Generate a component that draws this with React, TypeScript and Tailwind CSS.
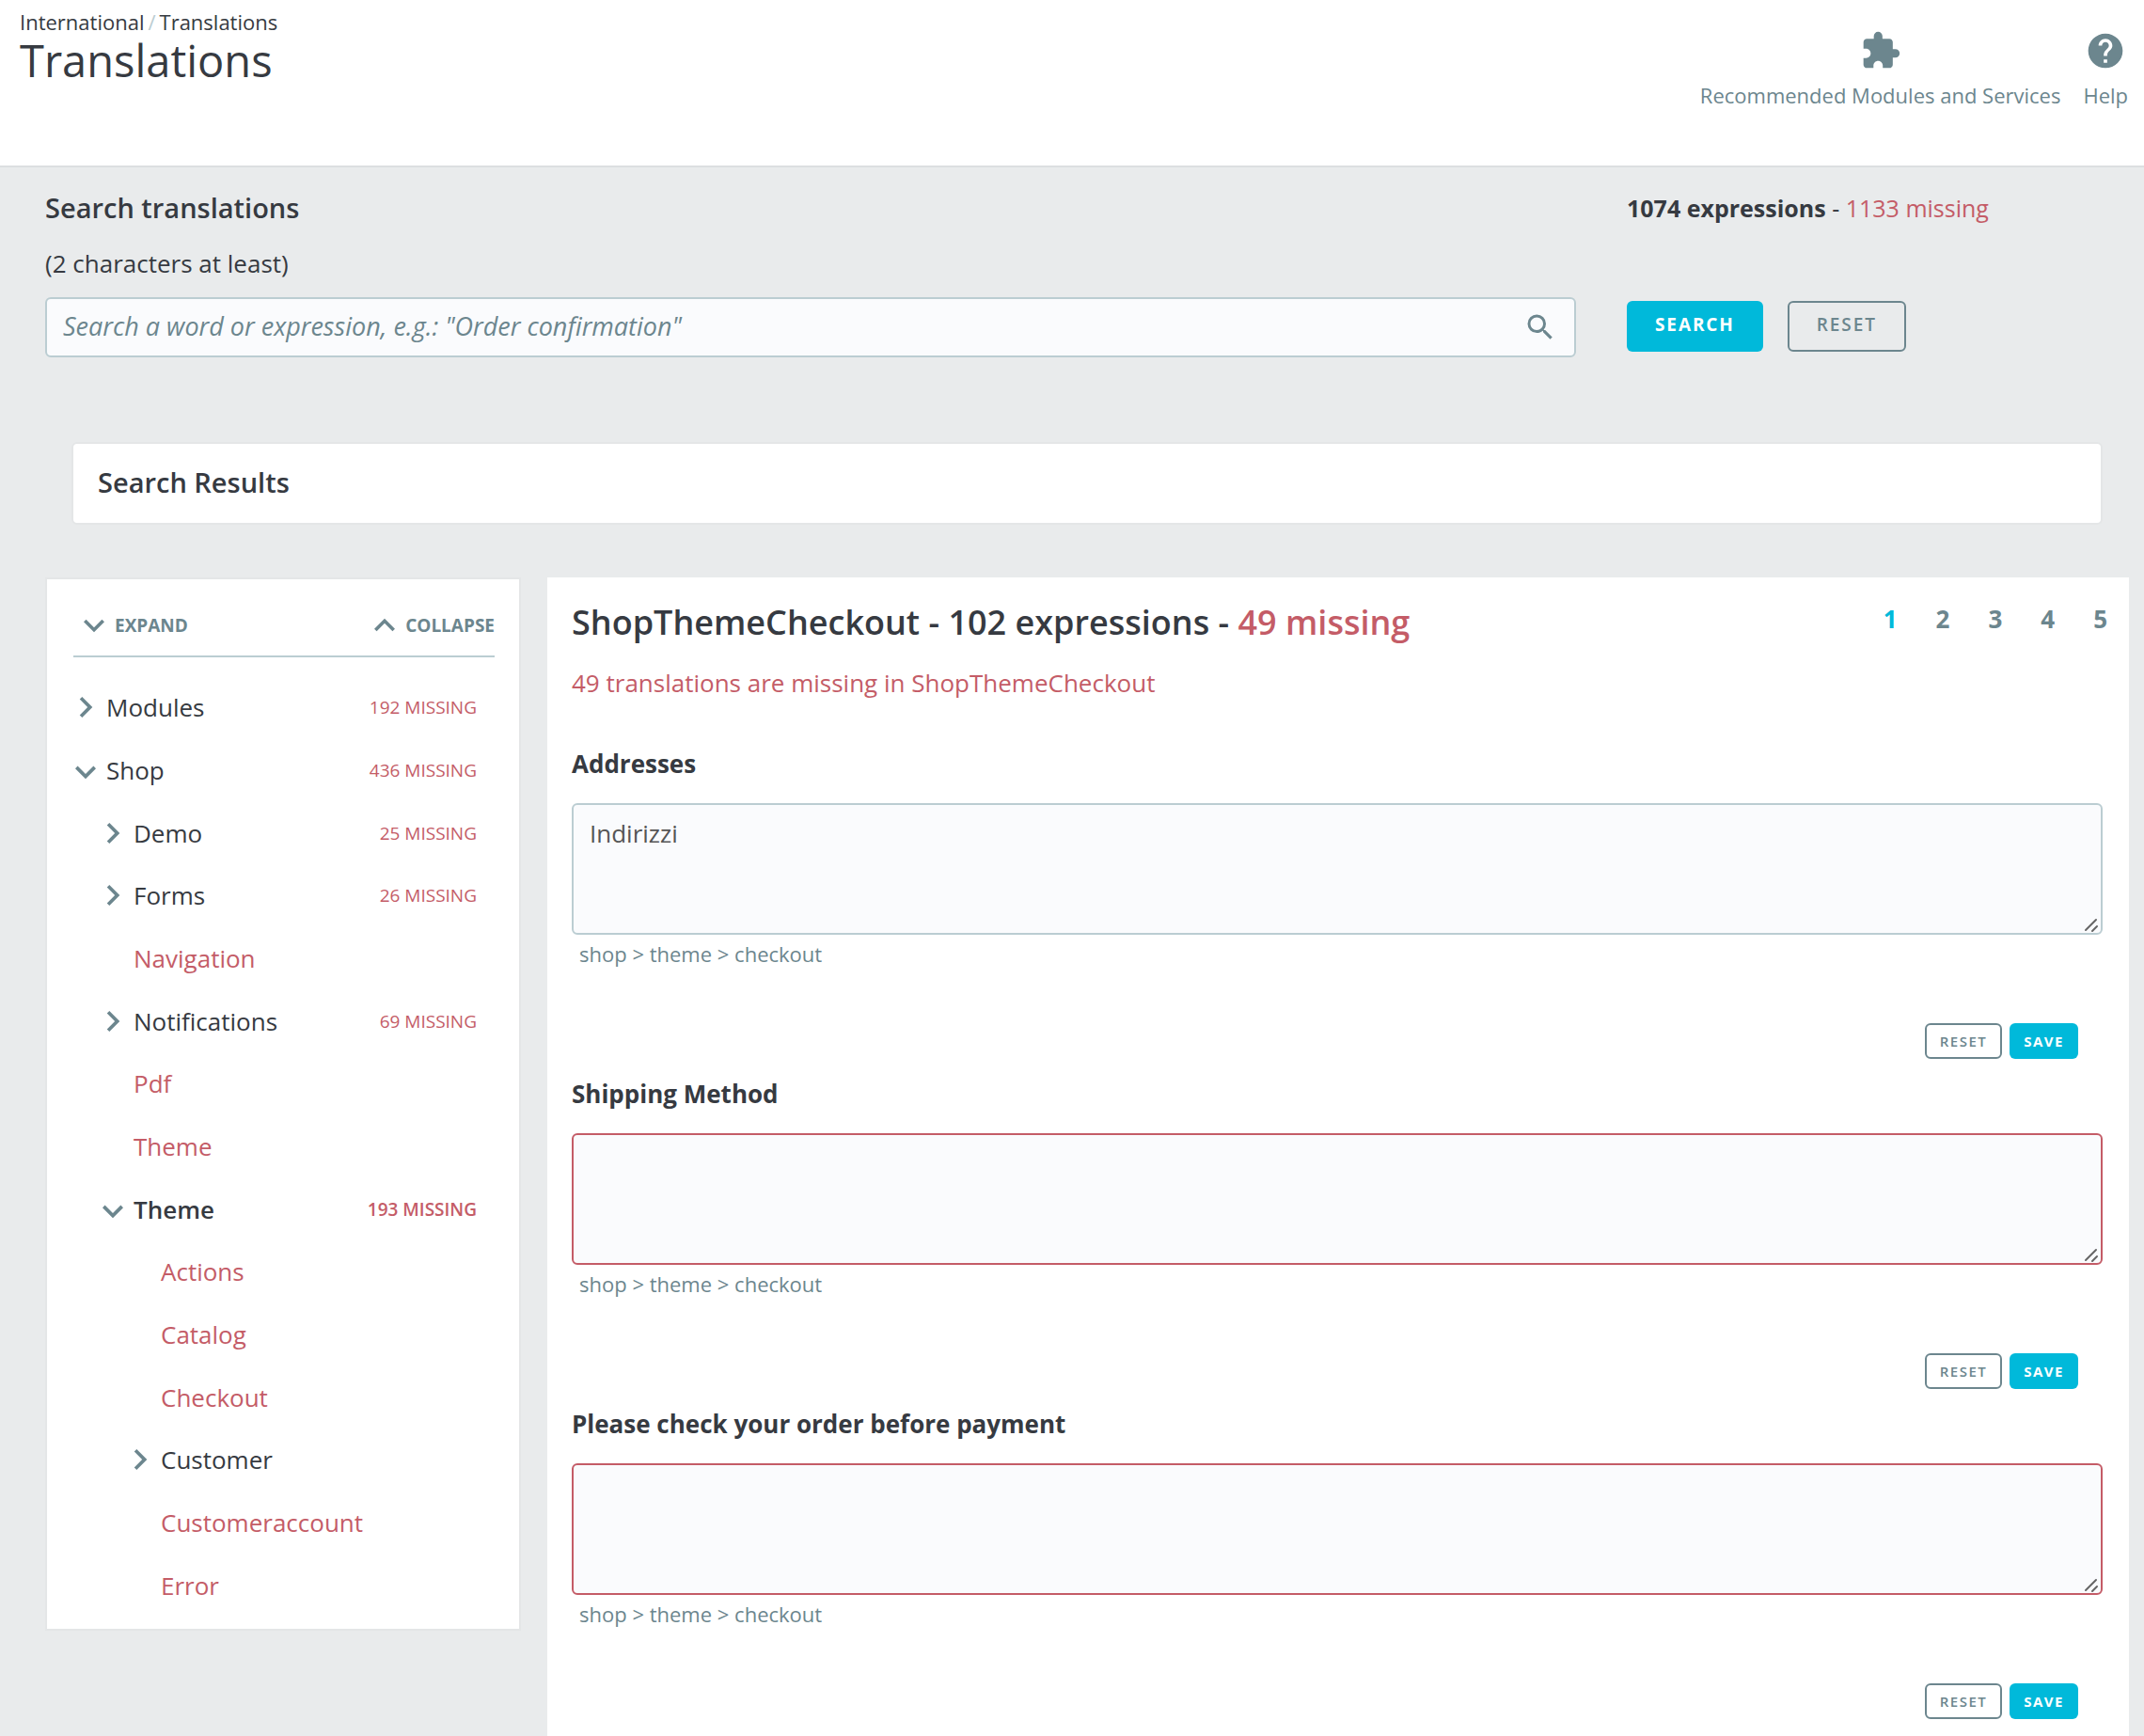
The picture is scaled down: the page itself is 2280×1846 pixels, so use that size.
import React from "react";
import { MdExtension, MdHelp, MdSearch } from "react-icons/md";

type Direction = "right" | "down" | "up";

const CHEVRONS: Record<Direction, string> = {
  right: "M10 6 8.59 7.41 13.17 12l-4.58 4.59L10 18l6-6z",
  down: "M16.59 8.59 12 13.17 7.41 8.59 6 10l6 6 6-6z",
  up: "m12 8-6 6 1.41 1.41L12 10.83l4.59 4.58L18 14z",
};

function Chevron({ direction, viewBox = "0 0 24 24" }: { direction: Direction; viewBox?: string }) {
  return (
    <svg viewBox={viewBox} className="size-11 shrink-0 fill-[#6c868e]" aria-hidden="true">
      <path d={CHEVRONS[direction]} />
    </svg>
  );
}

type Node = {
  name: string;
  level: 0 | 1 | 2;
  state?: "open" | "closed";
  missing?: number;
  active?: boolean;
};

const TREE: Node[] = [
  { name: "Modules", level: 0, state: "closed", missing: 192 },
  { name: "Shop", level: 0, state: "open", missing: 436 },
  { name: "Demo", level: 1, state: "closed", missing: 25 },
  { name: "Forms", level: 1, state: "closed", missing: 26 },
  { name: "Navigation", level: 1 },
  { name: "Notifications", level: 1, state: "closed", missing: 69 },
  { name: "Pdf", level: 1 },
  { name: "Theme", level: 1 },
  { name: "Theme", level: 1, state: "open", missing: 193, active: true },
  { name: "Actions", level: 2 },
  { name: "Catalog", level: 2 },
  { name: "Checkout", level: 2 },
  { name: "Customer", level: 2, state: "closed" },
  { name: "Customeraccount", level: 2 },
  { name: "Error", level: 2 },
];

const INDENT = ["pl-0", "pl-[29px]", "pl-[58px]"];

function TreeRow({ node }: { node: Node }) {
  return (
    <li
      className={`flex h-[66px] items-center nth-[3n+2]:h-[68px] ${INDENT[node.level]} ${
        node.active ? "font-semibold" : ""
      }`}
    >
      {node.state ? (
        <button type="button" className="flex items-center text-[26px] leading-9" aria-expanded={node.state === "open"}>
          {node.state === "open" ? (
            <Chevron direction="down" viewBox="0 -1 24 24" />
          ) : (
            <Chevron direction="right" />
          )}
          {node.name}
        </button>
      ) : (
        <a href="#" className="pl-11 text-[26px] leading-9 text-[#c45c67]">
          {node.name}
        </a>
      )}
      {node.missing && (
        <span className="ml-auto text-[19px] leading-9 text-[#c45c67] uppercase">{node.missing} missing</span>
      )}
    </li>
  );
}

type Expression = { id: string; label: string; value: string };

const EXPRESSIONS: Expression[] = [
  { id: "addresses", label: "Addresses", value: "Indirizzi" },
  { id: "shipping", label: "Shipping Method", value: "" },
  { id: "payment", label: "Please check your order before payment", value: "" },
];

function TranslationField({ item }: { item: Expression }) {
  return (
    <section>
      <label htmlFor={item.id} className="block text-[26px] leading-9 font-bold">
        {item.label}
      </label>
      <div className="relative mt-6">
        <textarea
          id={item.id}
          defaultValue={item.value}
          className={`block h-[140px] w-full resize-none rounded-md border-2 bg-[#fafbfd] px-[17px] py-3 text-[26px] leading-9 text-[#555555] outline-none ${
            item.value ? "border-[#bbcdd2]" : "border-[#c45c67]"
          }`}
        />
        <svg
          viewBox="0 0 16 16"
          className="pointer-events-none absolute right-1 bottom-0.5 size-4"
          fill="none"
          stroke="#666666"
          strokeWidth="2"
          strokeLinecap="round"
          aria-hidden="true"
        >
          <path d="M2 13 13 2M9 14l5-5" />
        </svg>
      </div>
      <p className="mt-1 pl-2 text-[22px] leading-8 text-[#6c868e]">shop &gt; theme &gt; checkout</p>
      <div className="mt-[58px] flex justify-end gap-2 pr-[26px]">
        <button
          type="button"
          className="rounded-md border-2 border-[#6c868e] px-3.5 py-[5px] text-[15px] leading-6 font-semibold tracking-widest text-[#6c868e] uppercase"
        >
          Reset
        </button>
        <button
          type="button"
          className="rounded-md bg-[#00b9da] px-[15px] py-[7px] text-[15px] leading-6 font-bold tracking-widest text-white uppercase"
        >
          Save
        </button>
      </div>
    </section>
  );
}

export default function App() {
  return (
    <div className="flex min-h-screen flex-col bg-[#e9ebec] font-['Open_Sans',sans-serif] text-[#363a41]">
      <header className="flex items-start justify-between border-b-2 border-[#dcdfe1] bg-white pr-[17px] pl-[21px]">
        <div className="pt-[11px] pb-[83px]">
          <nav aria-label="Breadcrumb" className="flex gap-1 text-[22px] leading-6">
            <a href="#">International</a>
            <span className="text-[#bbcdd2]">/</span>
            <a href="#">Translations</a>
          </nav>
          <h1 className="text-[47px] leading-[58px]">Translations</h1>
        </div>
        <nav aria-label="Page tools" className="flex gap-6 pt-8 text-[22px] leading-8 text-[#6c868e]">
          <a href="#" className="flex flex-col items-center gap-[9px]">
            <MdExtension className="size-11" />
            Recommended Modules and Services
          </a>
          <a href="#" className="flex flex-col items-center gap-[9px]">
            <MdHelp className="size-11" />
            Help
          </a>
        </nav>
      </header>

      <main className="flex flex-1 flex-col pt-[23px] pr-4 pl-12">
        <form className="flex gap-[54px]" onSubmit={(e) => e.preventDefault()}>
          <div className="flex-1">
            <label htmlFor="search" className="block text-[29px] leading-10 font-semibold">
              Search translations
            </label>
            <p className="mt-[19px] text-[26px] leading-10">(2 characters at least)</p>
            <div className="mt-4 flex items-center rounded-md border-2 border-[#bbcdd2] bg-[#fafbfd] pr-[18px] pl-[17px]">
              <input
                id="search"
                type="text"
                placeholder='Search a word or expression, e.g.: "Order confirmation"'
                className="h-15 flex-1 bg-transparent pb-1 text-[27px] font-medium italic outline-none placeholder:text-[#6c868e]"
              />
              <MdSearch className="size-9 text-[#6c868e]" aria-hidden="true" />
            </div>
          </div>
          <div className="w-[534px]">
            <p className="text-[25px] leading-10">
              <strong className="font-bold">1074 expressions</strong> -{" "}
              <span className="text-[#c45c67]">1133 missing</span>
            </p>
            <div className="mt-[79px] flex gap-[26px]">
              <button
                type="submit"
                className="rounded-md bg-[#00b9da] px-[30px] pt-[11px] pb-[15px] text-[19px] leading-7 font-bold tracking-widest text-white uppercase"
              >
                Search
              </button>
              <button
                type="reset"
                className="rounded-md border-2 border-[#6c868e] px-[29px] pt-[9px] pb-[13px] text-[19px] leading-7 font-semibold tracking-widest text-[#6c868e] uppercase"
              >
                Reset
              </button>
            </div>
          </div>
        </form>

        <section className="mx-7 mt-[90px] rounded-md border-2 border-[#e4e6e7] bg-white px-[26px] pt-[21px] pb-[23px]">
          <h2 className="text-[29px] leading-10 font-semibold">Search Results</h2>
        </section>

        <div className="mt-14 flex flex-1 gap-7">
          <aside className="w-[506px] shrink-0 self-start border-2 border-[#e4e6e7] bg-white pt-[25px] pb-[13px]">
            <div className="mr-[26px] ml-7 flex justify-between border-b-2 border-[#bbcdd2] pb-2 text-[19px] font-bold text-[#6c868e]">
              <button type="button" className="flex h-12 items-center uppercase">
                <Chevron direction="down" />
                Expand
              </button>
              <button type="button" className="flex h-12 items-center uppercase">
                <Chevron direction="up" />
                Collapse
              </button>
            </div>
            <ul className="mt-5 pr-[45px] pl-[19px]">
              {TREE.map((node, i) => (
                <TreeRow key={i} node={node} />
              ))}
            </ul>
          </aside>

          <div className="flex-1 bg-white pt-6 pr-[23px] pb-3 pl-[26px]">
            <div className="flex items-start justify-between">
              <h2 className="text-[36px] leading-12 font-semibold">
                ShopThemeCheckout - 102 expressions - <span className="text-[#c45c67]">49 missing</span>
              </h2>
              <nav
                aria-label="Pagination"
                className="flex gap-[41px] text-[26px] leading-10 font-bold text-[#6c868e]"
              >
                <a href="#" aria-current="page" className="text-[#00b9da]">
                  1
                </a>
                <a href="#">2</a>
                <a href="#">3</a>
                <a href="#">4</a>
                <a href="#">5</a>
              </nav>
            </div>
            <p className="mt-[22px] text-[26px] leading-9 text-[#c45c67]">
              49 translations are missing in ShopThemeCheckout
            </p>
            <div className="mt-[50px] flex flex-col gap-[19px] pr-[5px]">
              {EXPRESSIONS.map((item) => (
                <TranslationField key={item.id} item={item} />
              ))}
            </div>
          </div>
        </div>
      </main>
    </div>
  );
}
